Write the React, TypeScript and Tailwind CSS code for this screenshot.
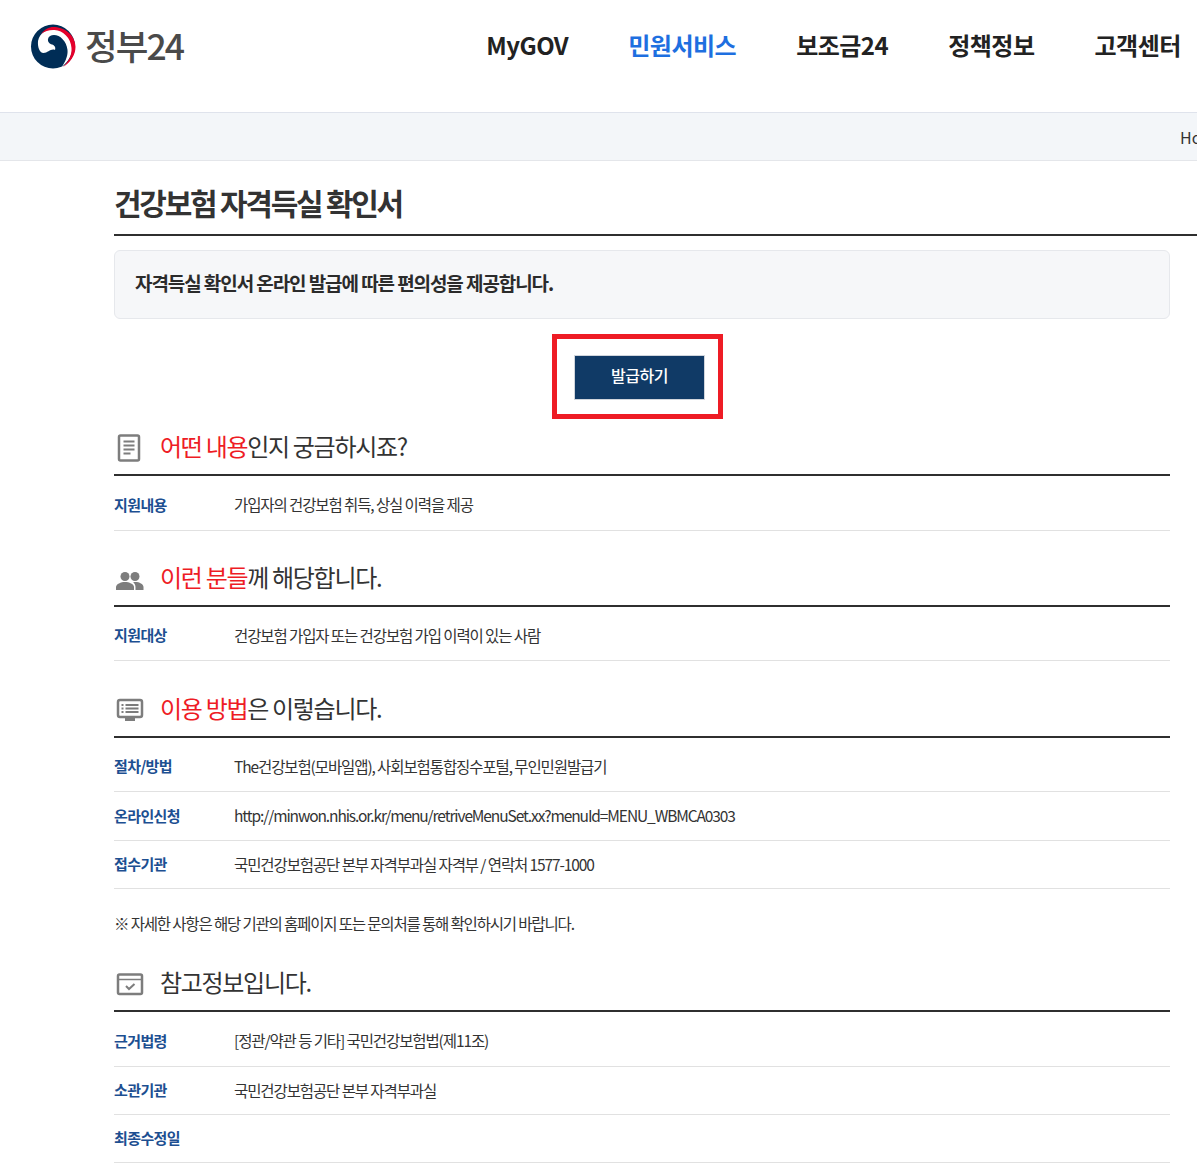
import type { ReactNode } from "react";

const font = "font-['Noto_Sans_CJK_KR','Noto_Sans',sans-serif]";

function Row({ label, children }: { label: string; children?: ReactNode }) {
  return (
    <div className="flex h-[48.5px] items-center border-b border-[#e1e1e1] first:pt-[4px]">
      <span className="w-[120px] shrink-0 text-[15px] font-bold tracking-[-0.6px] text-[#1d4f91]">
        {label}
      </span>
      <span className="text-[15.5px] tracking-[-1.1px] text-[#333]">{children}</span>
    </div>
  );
}

function Heading({
  icon,
  red,
  rest,
  className,
}: {
  icon: ReactNode;
  red?: string;
  rest: string;
  className: string;
}) {
  return (
    <div className={`flex h-[50px] items-center border-b-2 border-[#2f2f2f] pb-[8px] ${className}`}>
      <span className="mt-[4px] flex w-[46px] shrink-0 items-center">{icon}</span>
      <h3 className="text-[24px] font-normal tracking-[-1.3px] text-[#333]">
        {red && <span className="text-[#ee1c25]">{red}</span>}
        {rest}
      </h3>
    </div>
  );
}

function DocIcon() {
  return (
    <svg width="30" height="30" viewBox="0 0 30 30" fill="none" stroke="#7d7d7d">
      <rect x="5" y="2.500" width="20" height="25" rx="1.500" strokeWidth="2.500" />
      <path d="M9.500 8.500h11M9.500 12.500h11M9.500 16.500h11M9.500 20.500h7" strokeWidth="2" />
    </svg>
  );
}

function PeopleIcon() {
  return (
    <svg width="30" height="22" viewBox="0 0 30 22" fill="#7d7d7d" className="translate-x-[1px] translate-y-[2px]">
      <circle cx="10" cy="6.500" r="4.500" />
      <circle cx="20" cy="6.500" r="4.500" />
      <path d="M1 20v-3c0-3 5-5 9-5s9 2 9 5v3z" />
      <path d="M20.500 20v-3c0-1.800-.8-3.400-2.400-4.700.8-.2 1.500-.3 2.400-.3 3.800 0 8 2 8 5v3z" />
    </svg>
  );
}

function ScreenIcon() {
  return (
    <svg width="30" height="26" viewBox="0 0 30 26" fill="none" stroke="#7d7d7d">
      <rect x="4" y="3" width="24" height="17" rx="2" strokeWidth="2.500" />
      <path d="M7.500 8h2M7.500 11.500h2M7.500 15h2M11.500 8h13M11.500 11.500h13M11.500 15h13" strokeWidth="1.800" />
      <path d="M11 22.500h10" strokeWidth="3" />
    </svg>
  );
}

function CheckIcon() {
  return (
    <svg width="30" height="24" viewBox="0 0 30 24" fill="none" stroke="#7d7d7d">
      <rect x="4" y="2.500" width="24" height="19.500" rx="1.500" strokeWidth="2.500" />
      <path d="M3 7.500h25" strokeWidth="1.500" />
      <path d="M12 14l3 3 5.500-5" strokeWidth="2" />
    </svg>
  );
}

function Logo() {
  return (
    <svg width="46" height="46" viewBox="0 0 46 46">
      <circle cx="23" cy="22.500" r="22" fill="#002d56" />
      <path
        d="M8 17C10 8 18 4.500 25 5C36 6 42.500 14 42.500 23C42.500 31 38 38 32 42.500C36 37 38 31 37.500 26C36.500 17 30 11 24 11C21 11 18.500 12.500 18 15C17.500 18 19.500 19.800 22 20.500C24.500 21.200 26 23.500 25 26C21 24 18 29 13.500 29C9.500 29 7.500 23 8 17Z"
        fill="#fff"
      />
      <path
        d="M11 10C15 5 19.500 2.500 25 3C36 4 45.500 12 45.500 23C45.500 31 40 39 33 43C39 37 42 31 41.500 24C41 14 33 6.500 24.500 6C19.500 5.700 15 7 11 10Z"
        fill="#e4002b"
      />
    </svg>
  );
}

export default function App() {
  return (
    <div className={`relative h-[1172px] w-[1197px] overflow-hidden bg-white ${font}`}>
      <header className="flex h-[113px] border-b border-[#dfe3ec] pt-[24px]">
        <div className="flex h-[46px] items-center pl-[30px]">
          <Logo />
          <span className="mb-[4px] ml-[9px] text-[35.500px] font-medium tracking-[-1.900px] text-[#4a4a4a]">정부24</span>
        </div>
        <nav className="ml-[303px] flex h-[42px] items-center gap-[60px] whitespace-nowrap text-[24px] font-bold tracking-[-0.5px] text-[#222]">
          <span>MyGOV</span>
          <span className="text-[#1e6fe0]">민원서비스</span>
          <span>보조금24</span>
          <span>정책정보</span>
          <span>고객센터</span>
        </nav>
      </header>
      <div className="flex h-[48px] items-center whitespace-nowrap border-b border-[#e4e6ea] bg-[#f3f6f9] pl-[1180px] pt-[1px] text-[16px] text-[#333]">
        Home
      </div>

      <main className="pl-[114px]">
        <h2 className="flex h-[75px] w-[1100px] items-center border-b-2 border-[#2f2f2f] pt-[10px] text-[30px] font-bold tracking-[-2.250px] text-[#333]">
          건강보험 자격득실 확인서
        </h2>
        <div className="w-[1056px]">
          <div className="mt-[14px] flex h-[69px] items-center rounded-[6px] border border-[#e6e8ec] bg-[#f6f7f9] pb-[2px] pl-[20px] text-[19px] font-bold tracking-[-1.080px] text-[#2b2b2b]">
            자격득실 확인서 온라인 발급에 따른 편의성을 제공합니다.
          </div>
          <div className="ml-[460px] mt-[36px] flex">
            <button className="h-[45px] w-[131px] border border-[#d0d5dc] bg-[#103a66] pb-[5px] text-[16px] font-medium tracking-[-0.5px] text-white">
              발급하기
            </button>
          </div>

          <Heading className="mt-[26px]" icon={<DocIcon />} red="어떤 내용" rest="인지 궁금하시죠?" />
          <div className="[&>div]:h-[55px]">
            <Row label="지원내용">가입자의 건강보험 취득, 상실 이력을 제공</Row>
          </div>

          <Heading className="mt-[26px]" icon={<PeopleIcon />} red="이런 분들" rest="께 해당합니다." />
          <div className="[&>div]:h-[54px]">
            <Row label="지원대상">건강보험 가입자 또는 건강보험 가입 이력이 있는 사람</Row>
          </div>

          <Heading className="mt-[27px]" icon={<ScreenIcon />} red="이용 방법" rest="은 이렇습니다." />
          <div className="[&>div:first-child]:h-[54px]">
            <Row label="절차/방법">The건강보험(모바일앱), 사회보험통합징수포털, 무인민원발급기</Row>
            <Row label="온라인신청">http://minwon.nhis.or.kr/menu/retriveMenuSet.xx?menuId=MENU_WBMCA0303</Row>
            <Row label="접수기관">국민건강보험공단 본부 자격부과실 자격부 / 연락처 1577-1000</Row>
          </div>
          <p className="flex h-[71px] items-center pb-[1px] text-[15.500px] tracking-[-1.160px] text-[#333]">
            ※ 자세한 사항은 해당 기관의 홈페이지 또는 문의처를 통해 확인하시기 바랍니다.
          </p>

          <Heading className="mt-[2px]" icon={<CheckIcon />} rest="참고정보입니다." />
          <div className="[&>div]:h-[48px] [&>div:first-child]:h-[55px]">
            <Row label="근거법령">[정관/약관 등 기타] 국민건강보험법(제11조)</Row>
            <Row label="소관기관">국민건강보험공단 본부 자격부과실</Row>
            <Row label="최종수정일" />
          </div>
        </div>
      </main>

      <div className="pointer-events-none absolute left-[552px] top-[334px] h-[85px] w-[171px] border-[5px] border-[#ee1c25]" />
    </div>
  );
}
